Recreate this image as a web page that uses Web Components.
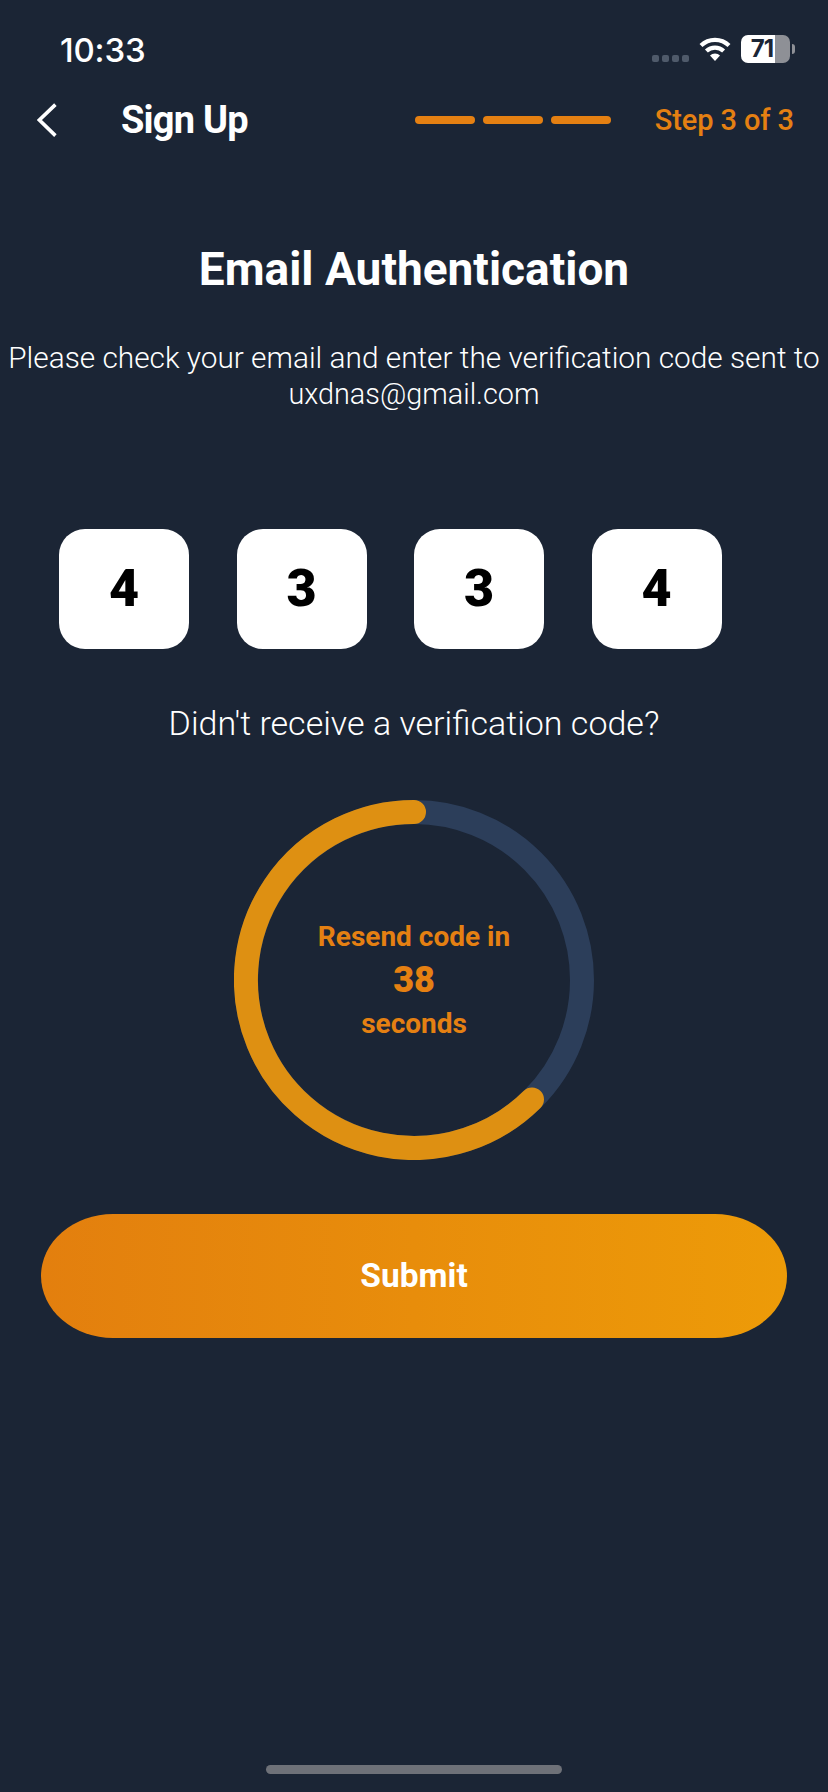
<!DOCTYPE html>
<html>
<head>
<meta charset="utf-8">
<title>Sign Up</title>
<style>
  html, body { margin: 0; padding: 0; background: #1b2535; }
</style>
</head>
<body>
<signup-page>
  <status-bar time="10:33" battery="71"></status-bar>
  <nav-header heading="Sign Up" step="Step 3 of 3"></nav-header>
  <auth-intro heading="Email Authentication" email="uxdnas@gmail.com">
    Please check your email and enter the verification code sent to
  </auth-intro>
  <code-row code="4334"></code-row>
  <resend-ring seconds="38"></resend-ring>
  <submit-button>Submit</submit-button>
  <home-bar></home-bar>
</signup-page>

<script>
const FONT = '"Roboto", "Open Sans", sans-serif'

class SignupPage extends HTMLElement {
  constructor() {
    super()
    this.attachShadow({mode: 'open'}).innerHTML = `
      <style>
        :host { display: flex; flex-direction: column; width: 828px; height: 1792px; background: #1b2535; color: #fff; font-family: ${FONT}; overflow: hidden; }
      </style>
      <slot></slot>`
  }
}

class StatusBar extends HTMLElement {
  constructor() {
    super()
    this.attachShadow({mode: 'open'}).innerHTML = `
      <style>
        :host { display: flex; align-items: center; height: 88px; padding: 10px 33px 0 60px; box-sizing: border-box; }
        .time { font: 500 33px/42px "Inter", sans-serif; letter-spacing: -.2px; flex: 1; padding-top: 1px; }
        .dots { display: flex; gap: 3px; margin: 18px 10px 0 0; }
        .dots i { width: 7px; height: 7px; border-radius: 2px; background: #4f5a6a; }
        svg { display: block; }
        .battery { display: flex; align-items: center; margin-left: 10px; }
        .level { width: 49px; height: 28px; border-radius: 7px; display: flex; align-items: center; justify-content: center; padding-right: 7px; box-sizing: border-box; background: linear-gradient(90deg, #fff 34px, #8e9096 34px); color: #1b2535; font: 700 24px/28px "Inter", sans-serif; letter-spacing: -1px; }
        .nub { width: 3px; height: 10px; margin-left: 2px; border-radius: 0 3px 3px 0; background: #8e9096; }
      </style>
      <span class="time"></span>
      <span class="dots"><i></i><i></i><i></i><i></i></span>
      <svg width="32" height="24" viewBox="0 0 32 24" fill="none" stroke="#fff" stroke-width="4.2">
        <path d="M2 8.6a20 20 0 0 1 28 0"/>
        <path d="M7.4 14a12.4 12.4 0 0 1 17.2 0"/>
        <path d="M16 24l-5-5.4a7 7 0 0 1 10 0z" fill="#fff" stroke="none"/>
      </svg>
      <span class="battery"><span class="level"></span><span class="nub"></span></span>`
    this.shadowRoot.querySelector('.time').textContent = this.getAttribute('time')
    this.shadowRoot.querySelector('.level').textContent = this.getAttribute('battery')
  }
}

class NavHeader extends HTMLElement {
  constructor() {
    super()
    this.attachShadow({mode: 'open'}).innerHTML = `
      <style>
        :host { display: flex; align-items: center; height: 64px; padding: 0 34px 0 37px; box-sizing: border-box; }
        svg { display: block; }
        .title { font-size: 38px; line-height: 48px; font-weight: 700; margin-left: 64px; flex: 1; letter-spacing: -.8px; }
        .bars { display: flex; gap: 8px; }
        .bars i { width: 60px; height: 8px; border-radius: 4px; background: #e58012; }
        .step { font-size: 29px; line-height: 36px; font-weight: 500; color: #e58012; margin-left: 44px; letter-spacing: -.1px; }
      </style>
      <svg width="20" height="34" viewBox="0 0 20 34" fill="none" stroke="#fff" stroke-width="3.6">
        <path d="M18.4 1.6L2.4 17l16 15.6"/>
      </svg>
      <span class="title"></span>
      <span class="bars"><i></i><i></i><i></i></span>
      <span class="step"></span>`
    this.shadowRoot.querySelector('.title').textContent = this.getAttribute('heading')
    this.shadowRoot.querySelector('.step').textContent = this.getAttribute('step')
  }
}

class AuthIntro extends HTMLElement {
  constructor() {
    super()
    this.attachShadow({mode: 'open'}).innerHTML = `
      <style>
        :host { display: block; text-align: center; }
        h1 { margin: 89px 0 42px; font-size: 46px; line-height: 56px; font-weight: 700; }
        p { margin: 0; font-size: 29.8px; line-height: 37px; font-weight: 300; white-space: nowrap; }
        span { display: block; font-size: 28.8px; }
      </style>
      <h1></h1>
      <p><slot></slot><span></span></p>`
    this.shadowRoot.querySelector('h1').textContent = this.getAttribute('heading')
    this.shadowRoot.querySelector('span').textContent = this.getAttribute('email')
  }
}

class CodeRow extends HTMLElement {
  constructor() {
    super()
    this.attachShadow({mode: 'open'}).innerHTML = `
      <style>
        :host { display: block; }
        .boxes { display: flex; gap: 47.5px; padding-left: 59px; margin-top: 116px; }
        .box { width: 130px; height: 120px; border-radius: 26px; background: #fff; color: #000; display: flex; align-items: center; justify-content: center; font-size: 52px; font-weight: 900; padding-bottom: 1px; box-sizing: border-box; }
        p { margin: 54px 0 0; text-align: center; font-size: 34px; line-height: 40px; font-weight: 300; }
      </style>
      <div class="boxes"></div>
      <p>Didn't receive a verification code?</p>`
    const boxes = this.shadowRoot.querySelector('.boxes')
    for (const digit of this.getAttribute('code')) {
      const box = document.createElement('div')
      box.className = 'box'
      box.textContent = digit
      boxes.appendChild(box)
    }
  }
}

class ResendRing extends HTMLElement {
  constructor() {
    super()
    this.attachShadow({mode: 'open'}).innerHTML = `
      <style>
        :host { display: grid; width: 360px; height: 360px; margin: 57px auto 0; }
        svg, .label { grid-area: 1 / 1; }
        svg { display: block; }
        .label { display: flex; flex-direction: column; align-items: center; justify-content: center; color: #e58012; font-weight: 700; font-size: 28px; line-height: 43px; }
        b { font-size: 36px; line-height: 43px; padding-top: 1px; }
      </style>
      <svg width="360" height="360" viewBox="0 0 360 360" fill="none" stroke-width="24">
        <circle cx="180" cy="180" r="168" stroke="#2c3e5a"/>
        <path d="M180 12A168 168 0 1 0 298 299.5" stroke="#de9012" stroke-linecap="round"/>
      </svg>
      <div class="label"><span>Resend code in</span><b></b><span>seconds</span></div>`
    this.shadowRoot.querySelector('b').textContent = this.getAttribute('seconds')
  }
}

class SubmitButton extends HTMLElement {
  constructor() {
    super()
    this.attachShadow({mode: 'open'}).innerHTML = `
      <style>
        :host { display: flex; align-items: center; justify-content: center; width: 746px; height: 124px; margin: 54px 0 0 41px; padding-bottom: 2px; box-sizing: border-box; border-radius: 72px / 62px; background: linear-gradient(90deg, #e37f0e, #ed9b08); color: #fff; font-size: 33.5px; font-weight: 700; }
      </style>
      <slot></slot>`
  }
}

class HomeBar extends HTMLElement {
  constructor() {
    super()
    this.attachShadow({mode: 'open'}).innerHTML = `
      <style>
        :host { display: block; width: 296px; height: 9px; margin: auto auto 18px; border-radius: 5px; background: #6e7178; }
      </style>`
  }
}

customElements.define('signup-page', SignupPage)
customElements.define('status-bar', StatusBar)
customElements.define('nav-header', NavHeader)
customElements.define('auth-intro', AuthIntro)
customElements.define('code-row', CodeRow)
customElements.define('resend-ring', ResendRing)
customElements.define('submit-button', SubmitButton)
customElements.define('home-bar', HomeBar)
</script>
</body>
</html>
